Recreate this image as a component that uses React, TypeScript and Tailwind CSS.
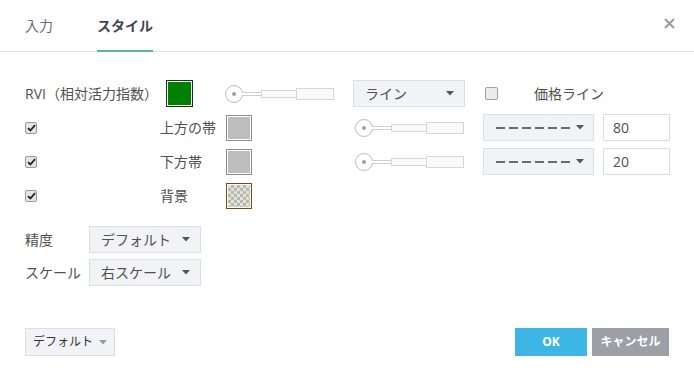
import React from 'react';

const font = { fontFamily: '"Open Sans", "Noto Sans CJK JP", sans-serif' };

function Caret({ color = '#555' }: { color?: string }) {
  return (
    <svg width="8" height="5" viewBox="0 0 8 5" className="shrink-0">
      <path d="M0 0 L8 0 L4 4.5 Z" fill={color} />
    </svg>
  );
}

function Checked() {
  return (
    <span className="w-[12px] h-[12px] border border-[#9a9a9a] bg-[#e4e4e4] rounded-[2px] flex items-center justify-center shrink-0">
      <svg width="9" height="8" viewBox="0 0 9 8">
        <path d="M1 4.2 L3.4 6.5 L8 1.2" stroke="#222" strokeWidth="1.8" fill="none" />
      </svg>
    </span>
  );
}

function Slider() {
  return (
    <div className="flex items-center w-[110px] shrink-0">
      <span className="w-[18px] h-[18px] rounded-full border border-[#b8bcc8] bg-white flex items-center justify-center shrink-0">
        <span className="w-[4px] h-[4px] rounded-full bg-[#a0a0a0]" />
      </span>
      <span className="w-[19px] h-[4px] -ml-px border-y border-[#cfcfcf] bg-white shrink-0" />
      <span className="w-[36px] h-[8px] border border-[#d6d6d6] bg-[#fafafa] shrink-0" />
      <span className="w-[38px] h-[12px] -ml-px border border-[#d6d6d6] bg-[#fafafa] shrink-0" />
    </div>
  );
}

function Select({ children, width }: { children: React.ReactNode; width: string }) {
  return (
    <div className={`${width} h-[27px] bg-[#f1f3f6] border border-[#dcdfe5] flex items-center justify-between pl-[11px] pr-[10px] text-[14px] text-[#505050] shrink-0`}>
      <span>{children}</span>
      <Caret />
    </div>
  );
}

function DashSelect() {
  return (
    <div className="w-[111px] h-[27px] bg-[#f1f3f6] border border-[#dcdfe5] flex items-center justify-between pl-[12px] pr-[9px] shrink-0">
      <div className="flex gap-[4px]">
        {[0, 1, 2, 3, 4, 5].map((i) => (
          <span key={i} className="w-[9px] h-[2px] bg-[#6b6b6b]" />
        ))}
      </div>
      <Caret />
    </div>
  );
}

function Swatch({ fill, border }: { fill: string; border: string }) {
  return (
    <div className={`w-[26px] h-[26px] border ${border} p-px bg-white shrink-0`}>
      <div className={`w-full h-full ${fill}`} />
    </div>
  );
}

function Checker() {
  return (
    <div className="w-[26px] h-[26px] border border-[#7a4a10] p-px bg-white shrink-0">
      <div className="w-full h-full bg-[#e2e2da] bg-[linear-gradient(45deg,#b8b8ae_25%,transparent_25%,transparent_75%,#b8b8ae_75%),linear-gradient(45deg,#b8b8ae_25%,transparent_25%,transparent_75%,#b8b8ae_75%)] bg-[length:6px_6px] bg-[position:0_0,3px_3px]" />
    </div>
  );
}

export default function App() {
  return (
    <div style={font} className="w-[694px] h-[381px] bg-white flex flex-col text-[#505050]">
      {/* Header */}
      <div className="h-[52px] border-b border-[#e1e3e8] flex items-end px-[25px] relative shrink-0">
        <div className="flex gap-[44px] text-[14px]">
          <div className="pb-[15px] text-[#6a6d74]">入力</div>
          <div className="pb-[13px] border-b-[2px] border-[#5ab98a] -mb-px font-bold text-[#3f4450]">スタイル</div>
        </div>
        <svg width="11" height="11" viewBox="0 0 11 11" className="absolute right-[19px] top-[18px]">
          <path d="M1 1 L10 10 M10 1 L1 10" stroke="#9a9a9a" strokeWidth="2" />
        </svg>
      </div>

      {/* Body */}
      <div className="pt-[28px] px-[25px] flex flex-col gap-[7px] text-[14px]">
        <div className="flex items-center h-[27px]">
          <div className="w-[141px] shrink-0">RVI（相対活力指数）</div>
          <div className="w-[27px] h-[27px] border border-[#0b3d0b] p-px bg-white shrink-0">
            <div className="w-full h-full bg-[#008000]" />
          </div>
          <div className="ml-[32px]">
            <Slider />
          </div>
          <div className="ml-[18px]">
            <Select width="w-[112px]">ライン</Select>
          </div>
          <span className="ml-[20px] w-[13px] h-[13px] border border-[#a0a0a0] rounded-[2px] bg-[#ececec] shrink-0" />
          <span className="ml-[36px]">価格ライン</span>
        </div>

        {[
          { label: '上方の帯', value: '80' },
          { label: '下方帯', value: '20' },
        ].map((r) => (
          <div key={r.label} className="flex items-center h-[27px]">
            <div className="w-[135px] shrink-0">
              <Checked />
            </div>
            <div className="w-[66px] shrink-0">{r.label}</div>
            <Swatch fill="bg-[#bdbdbd]" border="border-[#8c8c8c]" />
            <div className="ml-[103px]">
              <Slider />
            </div>
            <div className="ml-[18px]">
              <DashSelect />
            </div>
            <div className="ml-[9px] w-[67px] h-[27px] border border-[#dadde3] bg-white flex items-center pl-[9px] shrink-0">
              {r.value}
            </div>
          </div>
        ))}

        <div className="flex items-center h-[27px]">
          <div className="w-[135px] shrink-0">
            <Checked />
          </div>
          <div className="w-[66px] shrink-0">背景</div>
          <Checker />
        </div>

        <div className="mt-[10px] flex flex-col gap-[6px]">
          <div className="flex items-center h-[27px]">
            <div className="w-[64px] shrink-0">精度</div>
            <Select width="w-[112px]">デフォルト</Select>
          </div>
          <div className="flex items-center h-[27px]">
            <div className="w-[64px] shrink-0">スケール</div>
            <Select width="w-[112px]">右スケール</Select>
          </div>
        </div>
      </div>

      {/* Footer */}
      <div className="mt-[42px] px-[25px] flex items-center justify-between">
        <div className="w-[90px] h-[28px] bg-[#f1f3f6] border border-[#dcdfe5] flex items-center justify-center gap-[6px] text-[12px] text-[#333]">
          <span>デフォルト</span>
          <Caret color="#9a9a9a" />
        </div>
        <div className="flex gap-[5px]">
          <div className="w-[72px] h-[28px] bg-[#3db5e5] text-white text-[12px] font-bold flex items-center justify-center">OK</div>
          <div className="w-[77px] h-[28px] bg-[#9d9fa6] text-white text-[12px] font-bold flex items-center justify-center">キャンセル</div>
        </div>
      </div>
    </div>
  );
}
